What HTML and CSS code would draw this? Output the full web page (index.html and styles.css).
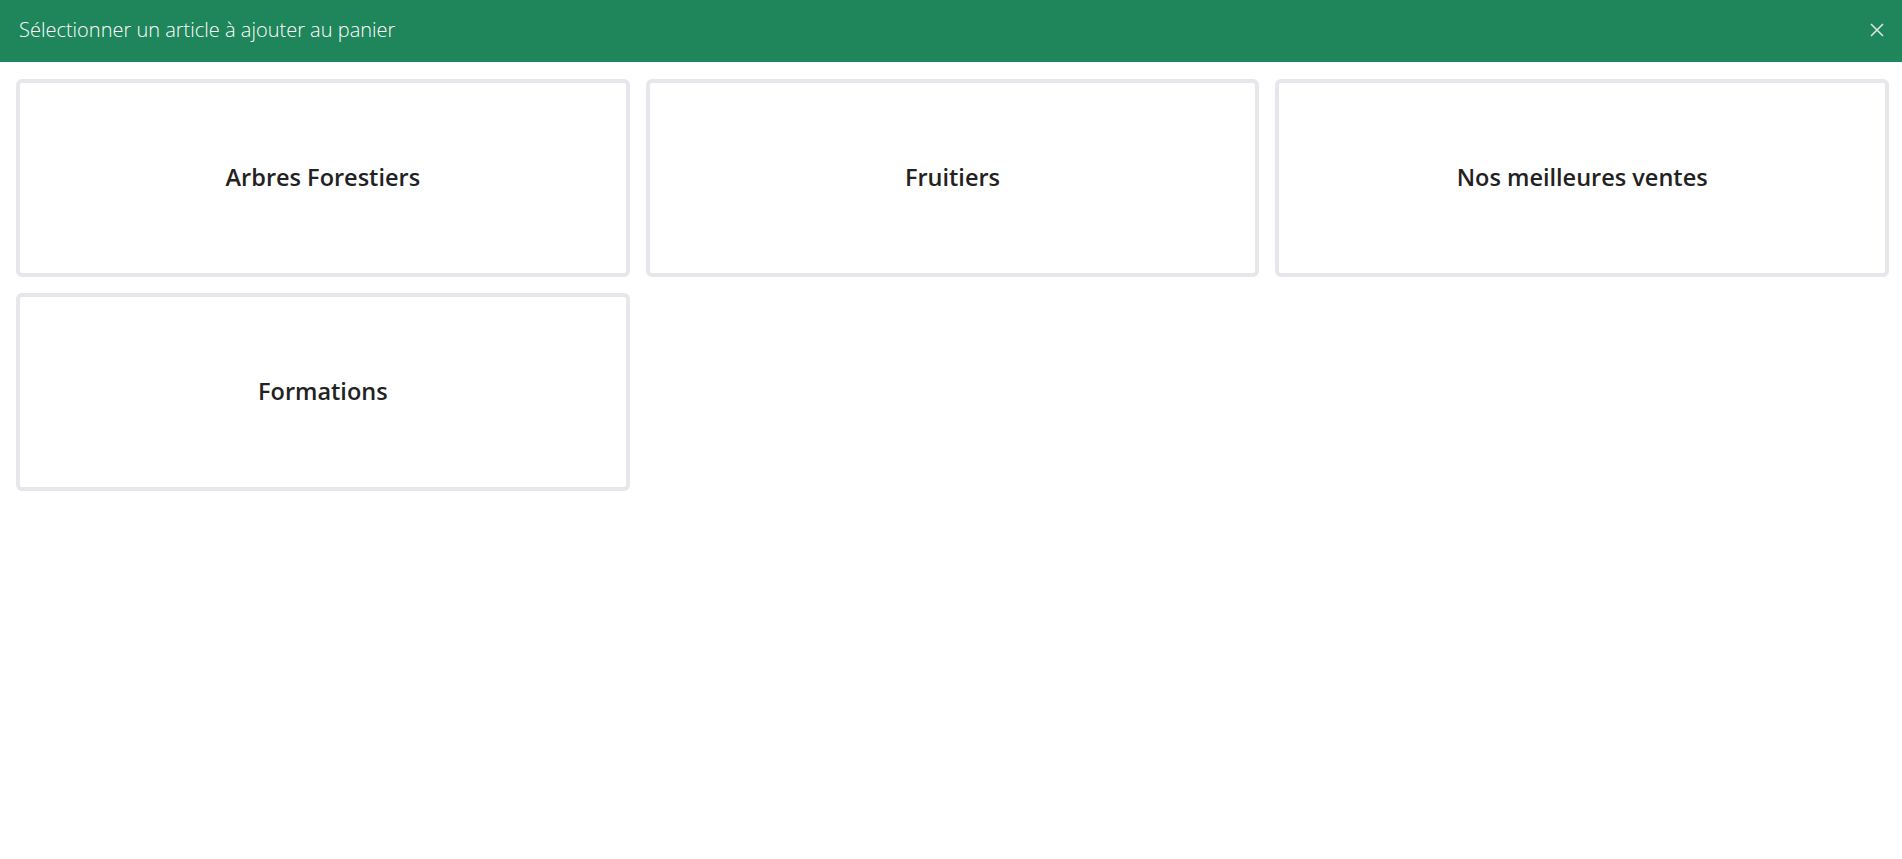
FILE: index.html
```html
<!DOCTYPE html>
<html lang="fr">
<head>
<meta charset="utf-8">
<title>Sélectionner un article</title>
<link rel="stylesheet" href="styles.css">
</head>
<body>
<header class="topbar">
  <h1 class="topbar-title">Sélectionner un article à ajouter au panier</h1>
  <button class="close-btn" aria-label="Fermer">
    <svg width="14" height="14" viewBox="0 0 14 14"><path d="M1 1L13 13M13 1L1 13" stroke="currentColor" stroke-width="1.6" fill="none"/></svg>
  </button>
</header>
<main class="grid">
  <button class="card">Arbres Forestiers</button>
  <button class="card">Fruitiers</button>
  <button class="card">Nos meilleures ventes</button>
  <button class="card">Formations</button>
</main>
</body>
</html>
```
FILE: styles.css
```css
* { box-sizing: border-box; }
html, body { margin: 0; padding: 0; background: #fff; }
body { font-family: "Open Sans", "Noto Sans", sans-serif; color: #222; }
.topbar {
  height: 62px;
  background: #1f855b;
  display: flex;
  align-items: center;
  justify-content: space-between;
  padding: 0 18px 3px 19px;
}
.topbar-title {
  margin: 0;
  font-size: 20px;
  font-weight: 300;
  color: #fff;
  letter-spacing: 0;
}
.close-btn {
  background: none;
  border: 0;
  padding: 0;
  color: #d8e8df;
  display: flex;
  cursor: pointer;
}
.grid {
  display: grid;
  grid-template-columns: repeat(3, 1fr);
  gap: 16px;
  padding: 17px 13px 16px 16px;
}
.card {
  height: 198px;
  background: #fff;
  border: 4px solid #e6e6eb;
  border-radius: 6px;
  font-family: inherit;
  font-size: 23.5px;
  font-weight: 600;
  color: #222;
  display: flex;
  align-items: center;
  justify-content: center;
  padding: 0 0 3px;
  cursor: pointer;
}
```
